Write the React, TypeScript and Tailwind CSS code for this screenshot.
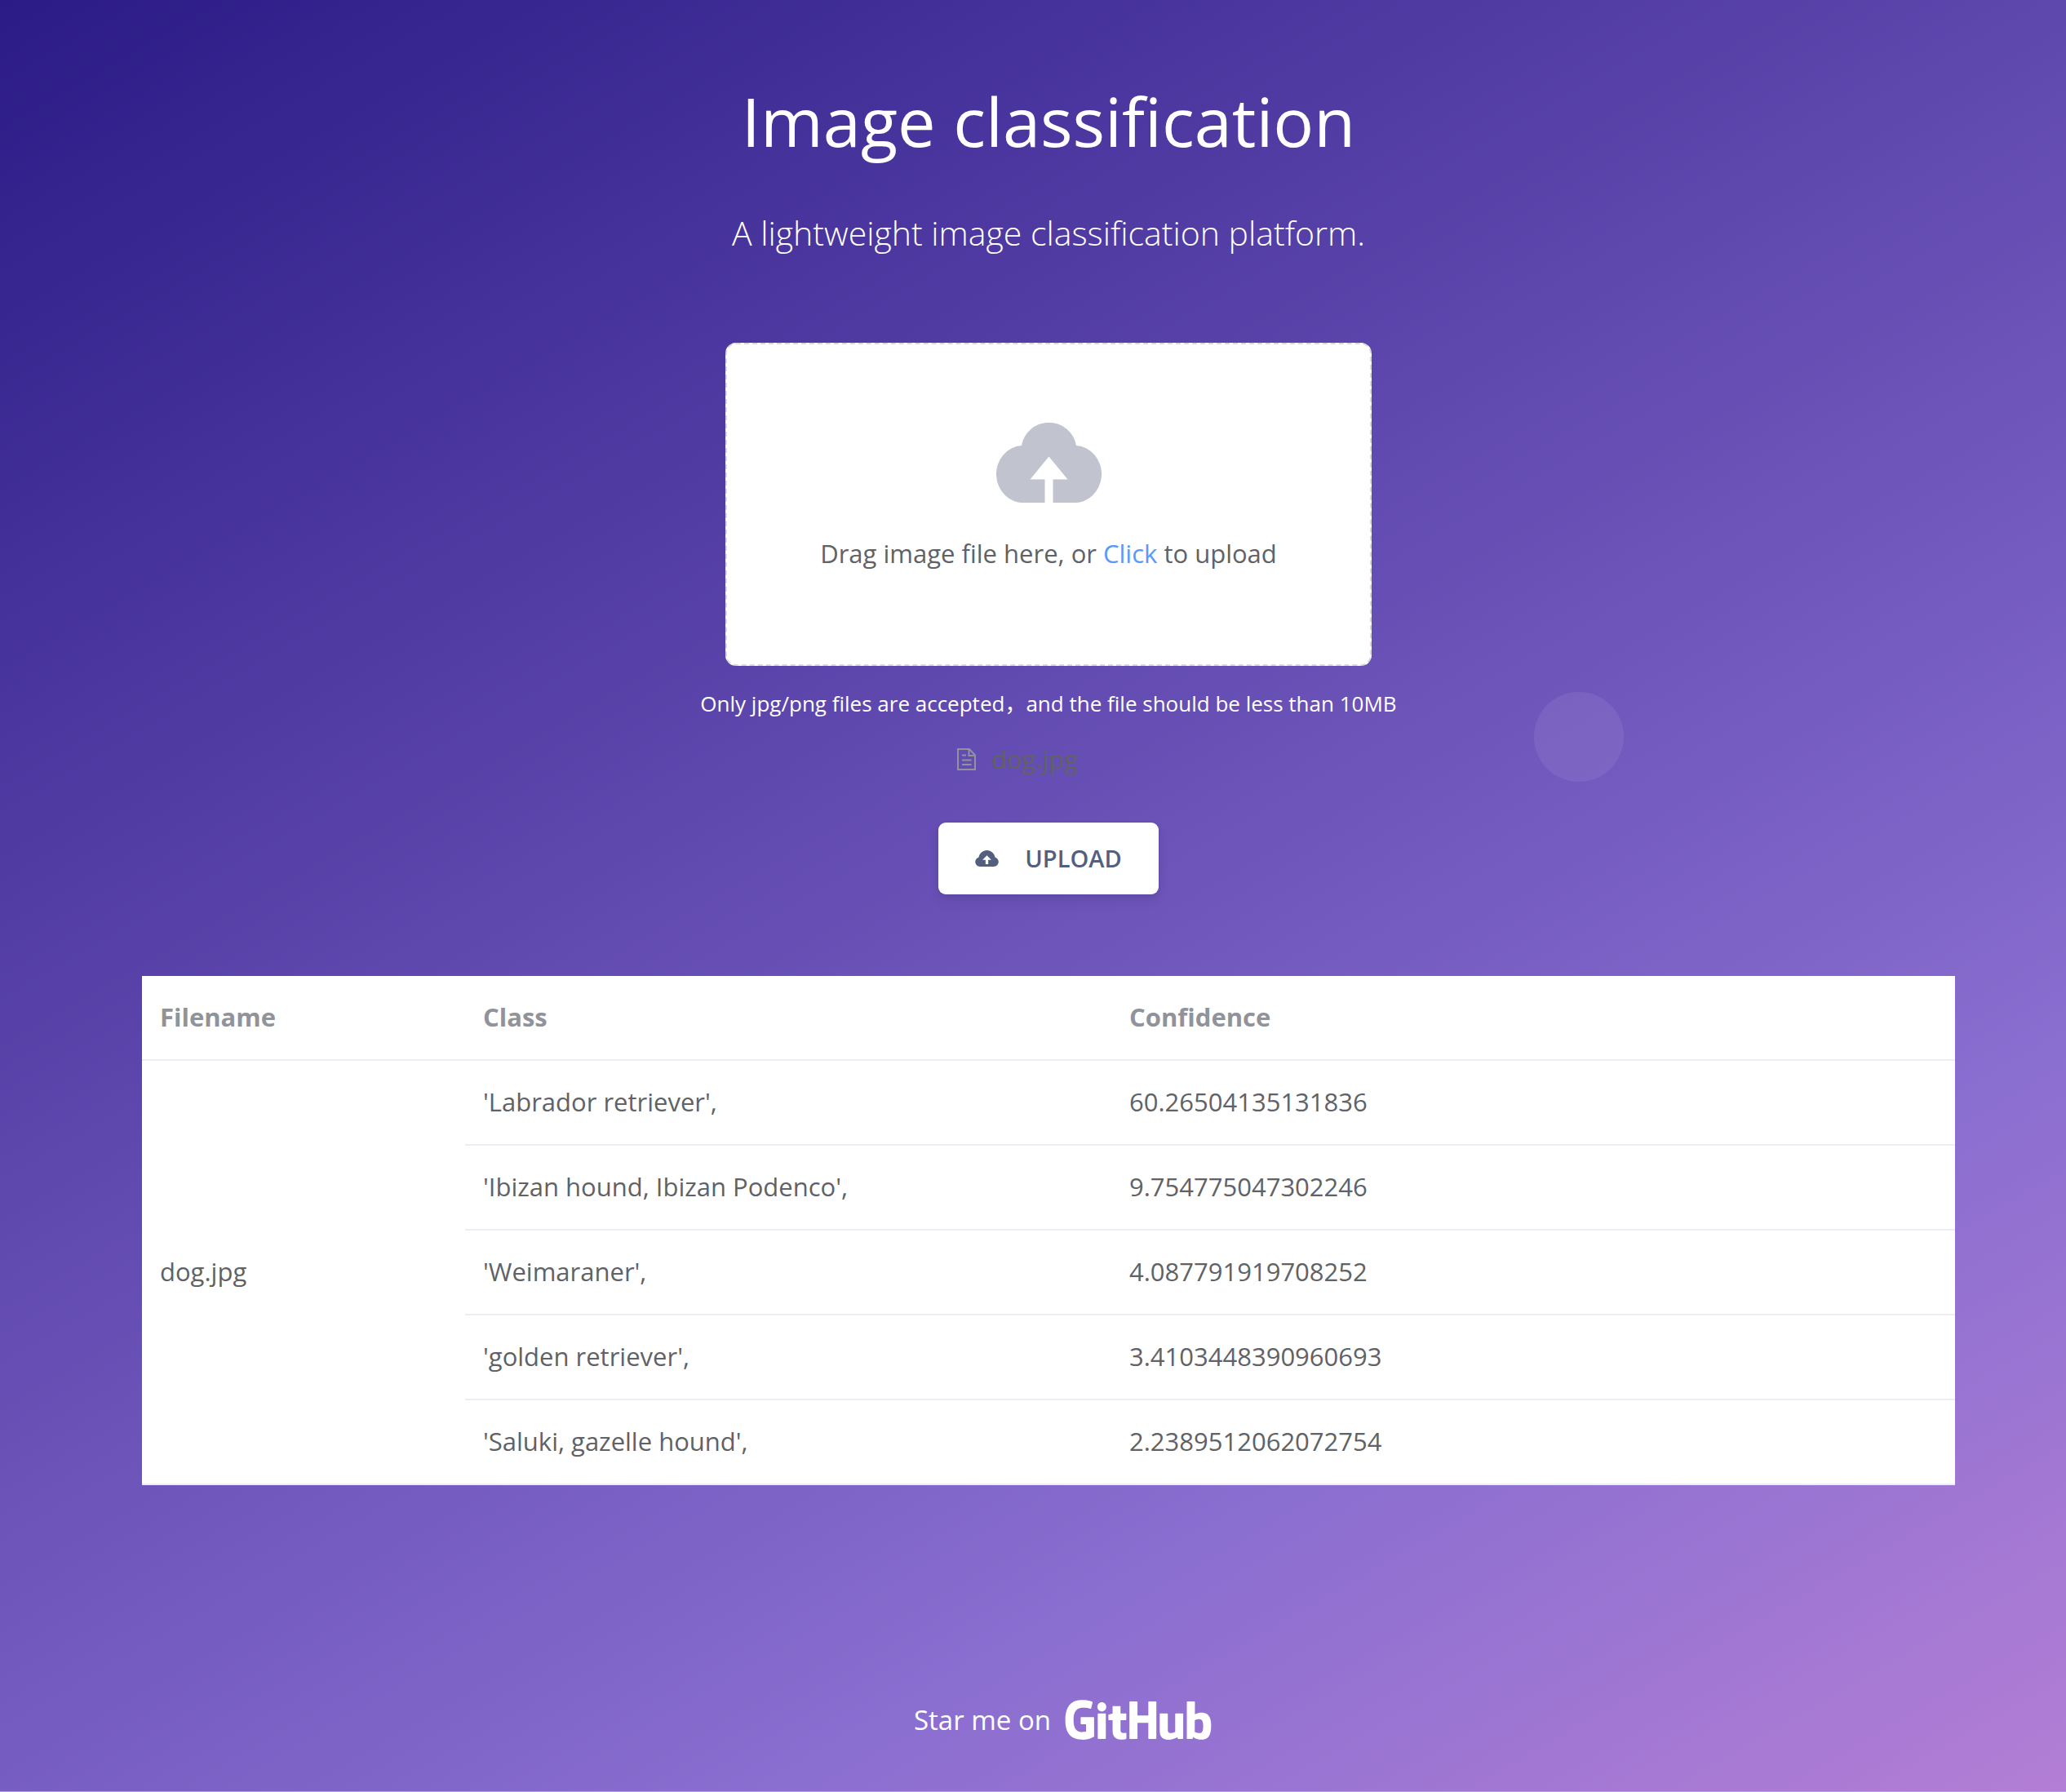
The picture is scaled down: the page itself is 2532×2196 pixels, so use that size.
import React from "react";
import { DiGithubFull } from "react-icons/di";

const results = [
  { name: "'Labrador retriever',", confidence: "60.26504135131836" },
  { name: "'Ibizan hound, Ibizan Podenco',", confidence: "9.754775047302246" },
  { name: "'Weimaraner',", confidence: "4.087791919708252" },
  { name: "'golden retriever',", confidence: "3.4103448390960693" },
  { name: "'Saluki, gazelle hound',", confidence: "2.2389512062072754" },
];

function CloudIcon() {
  return (
    <svg viewBox="0 0 129 98" className="h-[98px] w-[129px]" fill="#c1c4ce" aria-hidden="true">
      <path d="M31 28A34 34 0 0 1 98 28A33 35 0 0 1 94 98H69.5V69.5H87.5L64.5 41.5L41.5 69.5H59.5V98H35A33 35 0 0 1 31 28Z" />
    </svg>
  );
}

function SmallCloudIcon() {
  return (
    <svg viewBox="0 0 87 61" className="h-5 w-[29px]" fill="currentColor" aria-hidden="true">
      <path
        fillRule="evenodd"
        d="M13 26C16 11 28 0 43.500 0S71 11 74 26C82 29 87 36 87 43C87 53 79 61 69 61H18C8 61 0 53 0 43C0 36 5 29 13 26ZM43.500 19L27 36H38.500V52H48.500V36H60Z"
      />
    </svg>
  );
}

function DocumentIcon() {
  return (
    <svg viewBox="0 0 23 27" className="h-[27px] w-[23px]" fill="none" stroke="#909399" strokeWidth="2" aria-hidden="true">
      <path d="M1 1H15L22 8.500V26H1ZM14.500 1V9H22M6 8.500H11M6 14.500H17.500M6 20H17.500" />
    </svg>
  );
}

export default function App() {
  return (
    <div className="relative min-h-screen border-b border-[#b3a3dc] bg-[linear-gradient(150deg,#2b1b86_0%,#8a6ed0_75%,#b37ed5_100%)] pl-[38px] font-['Open_Sans','Noto_Sans_CJK_SC',sans-serif] text-white">
      <div className="absolute top-[848px] left-[1880px] size-[110px] rounded-full bg-white/7" />
      <main className="relative flex flex-col items-center px-[136px] pt-[88px]">
        <h1 className="text-[83px] leading-[120px]">Image classification</h1>
        <p className="mt-10 text-[41px] leading-[74px] font-light">A lightweight image classification platform.</p>

        <label className="mt-[98px] flex h-[396px] w-[792px] cursor-pointer flex-col items-center rounded-[13px] border-2 border-dashed border-[#d9d9d9] bg-white pt-24 text-[31px] leading-[44px] text-[#606266]">
          <input type="file" accept="image/jpeg,image/png" className="sr-only" />
          <CloudIcon />
          <span className="mt-10">
            Drag image file here, or <em className="text-[#5899fb] not-italic">Click</em> to upload
          </span>
        </label>
        <p className="mt-7 text-[26px] leading-9">Only jpg/png files are accepted，and the file should be less than 10MB</p>
        <div className="mt-[26px] flex w-[224px] items-center gap-[19px] text-[31px] leading-[48px] text-[#606266]">
          <DocumentIcon />
          <span>dog.jpg</span>
        </div>
        <button
          type="button"
          className="mt-[54px] flex h-[88px] w-[270px] items-center justify-center gap-8 rounded-[9px] bg-white text-[29px] font-semibold text-[#525f7f] shadow-[0_9px_13px_rgba(50,50,93,0.11),0_2px_7px_rgba(0,0,0,0.08)]"
        >
          <SmallCloudIcon />
          <span>UPLOAD</span>
        </button>

        <table className="mt-[100px] w-full table-fixed border-separate border-spacing-0 bg-white text-left text-[31px] leading-[50px] text-[#606266]">
          <colgroup>
            <col className="w-[396px]" />
            <col className="w-[792px]" />
            <col />
          </colgroup>
          <thead>
            <tr className="text-[#909399]">
              <th className="border-b-2 border-[#ebeef5] px-[22px] pt-[25px] pb-[27px] font-bold">Filename</th>
              <th className="border-b-2 border-[#ebeef5] px-[22px] pt-[25px] pb-[27px] font-bold">Class</th>
              <th className="border-b-2 border-[#ebeef5] px-[22px] pt-[25px] pb-[27px] font-bold">Confidence</th>
            </tr>
          </thead>
          <tbody>
            {results.map((row, i) => (
              <tr key={row.name}>
                {i === 0 && (
                  <td rowSpan={5} className="border-b-2 border-[#ebeef5] px-[22px] pt-[25px] pb-[27px] align-middle">
                    dog.jpg
                  </td>
                )}
                <td className="border-b-2 border-[#ebeef5] px-[22px] pt-[25px] pb-[27px]">{row.name}</td>
                <td className="border-b-2 border-[#ebeef5] px-[22px] pt-[25px] pb-[27px]">{row.confidence}</td>
              </tr>
            ))}
          </tbody>
        </table>
      </main>
      <footer className="relative flex items-center justify-center gap-4 pt-[252px] pb-[51px] pl-9 text-[33px] leading-[72px]">
        <span>Star me on</span>
        <a href="https://github.com" aria-label="GitHub" className="flex h-[72px] items-center pb-1">
          <DiGithubFull className="size-[182px]" />
        </a>
      </footer>
    </div>
  );
}
